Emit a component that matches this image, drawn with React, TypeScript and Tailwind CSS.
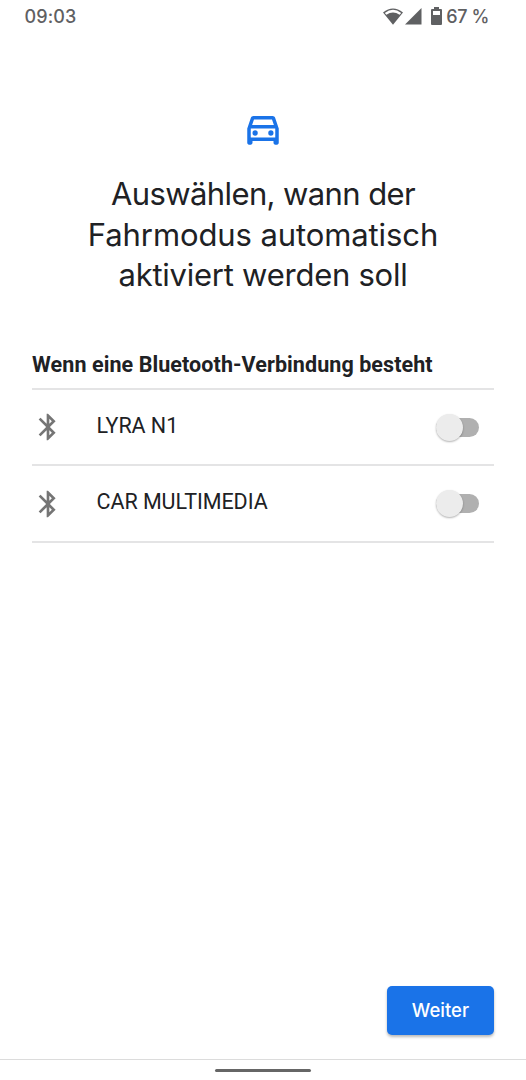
import { useState } from "react";

const devices = ["LYRA N1", "CAR MULTIMEDIA"];

function StatusBar() {
  return (
    <header className="flex h-8 shrink-0 items-center justify-between pl-[24.5px] pr-[38px] text-[#5f6062]">
      <span className="mt-px font-['Inter',sans-serif] text-[18px] font-medium leading-8 tracking-[0.1px]">09:03</span>
      <div className="flex items-center">
        <svg className="h-[17px] w-[20px]" viewBox="0 0 20 17" fill="none">
          <path d="M10 16.7 0 4.6Q10-3.6 20 4.6Z" fill="currentColor" />
          <path d="M1.8 4.9Q10-1.2 18.2 4.9L16.6 6.8Q10 2.2 3.4 6.8Z" fill="white" />
        </svg>
        <svg className="ml-[2px] h-[17px] w-[17px]" viewBox="0 0 17 17">
          <path d="M0 16.5H16.5V0Z" fill="currentColor" />
        </svg>
        <svg className="ml-[9px] h-[18px] w-[11px]" viewBox="0 0 11 18">
          <path fillRule="evenodd" d="M3 0H8V2H10Q11 2 11 3V17Q11 18 10 18H1Q0 18 0 17V3Q0 2 1 2H3ZM2 4V8H9V4Z" fill="currentColor" />
        </svg>
        <span className="-mr-px ml-1 mt-px whitespace-nowrap font-['Inter',sans-serif] text-[18px] font-medium leading-8 tracking-[-0.4px]">67 %</span>
      </div>
    </header>
  );
}

function DeviceRow({ name }: { name: string }) {
  const [on, setOn] = useState(false);
  return (
    <li className="flex h-[76.4px] items-center border-b-2 border-[#e4e4e5]">
      <svg className="size-8 shrink-0 text-[#757575]" viewBox="0 0 24 24" fill="currentColor">
        <path d="M17.71 7.71 12 2h-1v7.59L6.41 5 5 6.41 10.59 12 5 17.59 6.41 19 11 14.41V22h1l5.71-5.71-4.3-4.29zM13 5.83l1.88 1.88L13 9.59zM14.88 16.29 13 18.17v-3.76z" />
      </svg>
      <span className="-mt-[3px] ml-[32.5px] flex-1 text-[21.5px] leading-7 tracking-[-0.05px]">{name}</span>
      <button
        role="switch"
        aria-checked={on}
        aria-label={name}
        onClick={() => setOn(!on)}
        className="mr-[15px] flex h-7 w-[43px] items-center"
      >
        <span className="flex h-[19px] w-full items-center rounded-full bg-[#b0b0b0]">
          <span className={`size-[27px] rounded-full bg-[#ececec] shadow-[0_1px_2px_rgba(0,0,0,0.3)] ${on ? "ml-4" : ""}`} />
        </span>
      </button>
    </li>
  );
}

export default function App() {
  return (
    <div className="flex h-[1080px] w-[526px] flex-col bg-white font-['Roboto',sans-serif] text-[#202124]">
      <StatusBar />
      <main className="flex flex-1 flex-col px-8">
        <svg className="mt-[75px] h-[43px] w-[42px] self-center text-[#1a73e8]" viewBox="0 0 24 24" preserveAspectRatio="none" fill="currentColor">
          <path fillRule="evenodd" d="M18.92 6.01C18.72 5.42 18.16 5 17.5 5h-11c-.66 0-1.21.42-1.42 1.01L3 12v8c0 .55.45 1 1 1h1c.55 0 1-.45 1-1v-1h12v1c0 .55.45 1 1 1h1c.55 0 1-.45 1-1v-8zM6.85 7h10.29l1.08 3.11H5.77zM19 17H5v-5h14z" />
          <circle cx="7.5" cy="14.5" r="1.5" />
          <circle cx="16.5" cy="14.5" r="1.5" />
        </svg>
        <h1 className="mt-6 flex flex-col items-center whitespace-nowrap font-['Inter',sans-serif] text-[31px] font-normal leading-[40.5px]">
          <span className="tracking-[-0.6px]">Auswählen, wann der</span>
          <span className="tracking-[-0.1px]">Fahrmodus automatisch</span>
          <span className="tracking-[-0.25px]">aktiviert werden soll</span>
        </h1>
        <h2 className="mt-[53.5px] flex h-[41px] items-start whitespace-nowrap border-b-2 border-[#e4e4e5] text-[21.5px] font-bold leading-8 tracking-[0.08px]">
          Wenn eine Bluetooth-Verbindung besteht
        </h2>
        <ul>
          {devices.map((name) => (
            <DeviceRow key={name} name={name} />
          ))}
        </ul>
        <button className="mb-6 mt-auto h-[49px] w-[107px] self-end rounded-[5px] bg-[#1a73e8] font-['Inter',sans-serif] text-[18.5px] font-medium text-white shadow-[0_2px_3px_rgba(0,0,0,0.28)]">
          Weiter
        </button>
      </main>
      <footer className="flex h-[21px] shrink-0 justify-center border-t border-[#dcdcdc]">
        <div className="mt-[9px] h-[3px] w-24 rounded-full bg-[#666666]" />
      </footer>
    </div>
  );
}
